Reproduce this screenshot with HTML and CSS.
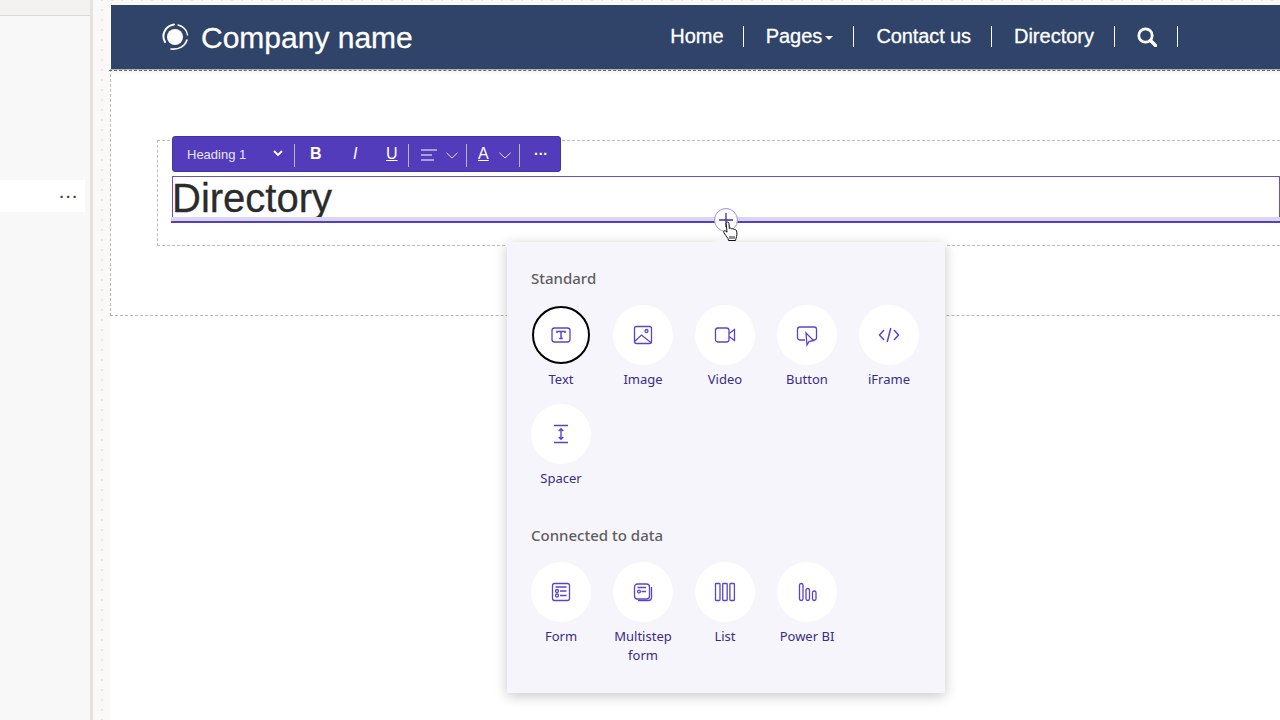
FILE: index.html
```html
<!DOCTYPE html>
<html lang="en">
<head>
    <meta charset="UTF-8">
    <meta name="viewport" content="width=device-width, initial-scale=1.0">
    <title>Directory</title>
    <link rel="stylesheet" href="styles.css">
</head>
<body>

<aside class="side">
    <div class="side-top"></div>
    <div class="side-row"><span class="side-more">···</span></div>
</aside>

<main class="canvas">
    <div class="page">
        <header class="site-header">
            <div class="brand">
                <svg class="brand-logo" width="28" height="28" viewBox="0 0 28 28">
                    <circle cx="14" cy="14" r="8" fill="#fff"/>
                    <path d="M4 19C0 12 4 3 13 1.500" fill="none" stroke="#fff" stroke-width="2" stroke-linecap="round"/>
                    <path d="M17 2C22 3 26 7 26.500 12" fill="none" stroke="#fff" stroke-width="1.400" stroke-linecap="round"/>
                    <path d="M26 17C24 23 18 27 10 26" fill="none" stroke="#fff" stroke-width="1.600" stroke-linecap="round"/>
                </svg>
                <span>Company name</span>
            </div>
            <nav class="nav">
                <a class="nav-item nav-home">Home</a>
                <a class="nav-item">Pages<i class="caret"></i></a>
                <a class="nav-item nav-contact">Contact us</a>
                <a class="nav-item">Directory</a>
                <a class="nav-item nav-search">
                    <svg width="20" height="20" viewBox="0 0 20 20">
                        <circle cx="8.500" cy="8.500" r="6.700" fill="none" stroke="#fff" stroke-width="2.800"/>
                        <path d="M13.500 13.500L18.500 18.500" stroke="#fff" stroke-width="3.400" stroke-linecap="round"/>
                    </svg>
                </a>
            </nav>
        </header>

        <section class="section">
            <div class="column">
                <div class="toolbar">
                    <span class="tb-style">Heading 1</span>
                    <svg class="tb-chev-bold" width="10" height="7" viewBox="0 0 10 7"><path d="M1 1L5 5L9 1" fill="none" stroke="#fff" stroke-width="1.800"/></svg>
                    <i class="tb-sep tb-sep-1"></i>
                    <b class="tb-btn tb-b">B</b>
                    <em class="tb-btn tb-i">I</em>
                    <span class="tb-btn tb-u">U</span>
                    <i class="tb-sep tb-sep-2"></i>
                    <svg class="tb-align" width="16" height="12" viewBox="0 0 16 12"><path d="M0 1H16M0 6H11M0 11H13" stroke="#fff" stroke-width="1"/></svg>
                    <svg class="tb-chev" width="12" height="7" viewBox="0 0 12 7"><path d="M.5 .8L6 6L11.500 .8" fill="none" stroke="#e4e1f5" stroke-width="1"/></svg>
                    <i class="tb-sep tb-sep-3"></i>
                    <span class="tb-btn tb-a">A</span>
                    <svg class="tb-chev tb-chev-2" width="12" height="7" viewBox="0 0 12 7"><path d="M.5 .8L6 6L11.500 .8" fill="none" stroke="#e4e1f5" stroke-width="1"/></svg>
                    <i class="tb-sep tb-sep-4"></i>
                    <span class="tb-more">···</span>
                </div>
                <h1 class="heading">Directory</h1>
            </div>
        </section>

        <button class="add-btn">
            <svg width="14" height="14" viewBox="0 0 14 14"><path d="M7 0V14M0 7H14" stroke="#3f2fa0" stroke-width="1.300"/></svg>
        </button>

        <div class="popover">
            <h2 class="group-title">Standard</h2>
            <div class="tiles">
                <div class="tile tile-selected">
                    <div class="tile-circle">
                        <svg width="24" height="24" viewBox="0 0 24 24" class="ico">
                            <rect x="3" y="5" width="18" height="14" rx="2.500"/>
                            <path d="M8 10V8.500H16V10M12 8.500V15.500M10.200 15.500H13.800" stroke-width="1.500"/>
                        </svg>
                    </div>
                    <span class="tile-label">Text</span>
                </div>
                <div class="tile">
                    <div class="tile-circle">
                        <svg width="24" height="24" viewBox="0 0 24 24" class="ico">
                            <rect x="3.500" y="3.500" width="17" height="17" rx="2"/>
                            <circle cx="15.500" cy="8" r="1.500"/>
                            <path d="M3.500 18.500L10.500 12L20.500 20"/>
                        </svg>
                    </div>
                    <span class="tile-label">Image</span>
                </div>
                <div class="tile">
                    <div class="tile-circle">
                        <svg width="24" height="24" viewBox="0 0 24 24" class="ico">
                            <rect x="2.500" y="5" width="13.500" height="14" rx="2.500"/>
                            <path d="M16 10.500L21.500 6.500V17.500L16 13.500"/>
                        </svg>
                    </div>
                    <span class="tile-label">Video</span>
                </div>
                <div class="tile">
                    <div class="tile-circle">
                        <svg width="24" height="24" viewBox="0 0 24 24" class="ico">
                            <path d="M10 17H5C3.500 17 2.500 16 2.500 14.500V6.500C2.500 5 3.500 4 5 4H19.500C21 4 21.500 5 21.500 6.500V14.500C21.500 16 20.500 17 19 17H17"/>
                            <path d="M11 10L12 22L14 18.500L18.500 17.500Z"/>
                        </svg>
                    </div>
                    <span class="tile-label">Button</span>
                </div>
                <div class="tile">
                    <div class="tile-circle">
                        <svg width="24" height="24" viewBox="0 0 24 24" class="ico">
                            <path d="M7 7L2.500 12L7 17M17 7L21.500 12L17 17M13.800 5L10.200 19" stroke-width="1.500"/>
                        </svg>
                    </div>
                    <span class="tile-label">iFrame</span>
                </div>
                <div class="tile">
                    <div class="tile-circle">
                        <svg width="24" height="24" viewBox="0 0 24 24" class="ico">
                            <path d="M5 3.500H19M5 20.500H19M12 7V17M9.800 9L12 6.800L14.200 9M9.800 15L12 17.200L14.200 15" stroke-width="1.400"/>
                        </svg>
                    </div>
                    <span class="tile-label">Spacer</span>
                </div>
            </div>

            <h2 class="group-title group-title-2">Connected to data</h2>
            <div class="tiles">
                <div class="tile">
                    <div class="tile-circle">
                        <svg width="24" height="24" viewBox="0 0 24 24" class="ico">
                            <rect x="3.500" y="3.500" width="17" height="17" rx="2"/>
                            <path d="M6.500 7H17.500M11 11H17.500M11 15.500H17.500"/>
                            <circle cx="8" cy="11" r="1.500"/>
                            <circle cx="8" cy="15.500" r="1.500"/>
                        </svg>
                    </div>
                    <span class="tile-label">Form</span>
                </div>
                <div class="tile">
                    <div class="tile-circle">
                        <svg width="24" height="24" viewBox="0 0 24 24" class="ico">
                            <rect x="3.500" y="4" width="15" height="15" rx="3"/>
                            <path d="M6.500 7.500H15M10.500 11.500H15"/>
                            <circle cx="8" cy="11.500" r="1.400"/>
                            <path d="M20.500 7V17.500C20.500 19.500 19.500 20.500 17.500 20.500H7"/>
                        </svg>
                    </div>
                    <span class="tile-label">Multistep form</span>
                </div>
                <div class="tile">
                    <div class="tile-circle">
                        <svg width="24" height="24" viewBox="0 0 24 24" class="ico">
                            <rect x="2.500" y="3.500" width="4.500" height="17" rx=".8"/>
                            <rect x="9.700" y="3.500" width="4.500" height="17" rx=".8"/>
                            <rect x="16.900" y="3.500" width="4.500" height="17" rx=".8"/>
                        </svg>
                    </div>
                    <span class="tile-label">List</span>
                </div>
                <div class="tile">
                    <div class="tile-circle">
                        <svg width="24" height="24" viewBox="0 0 24 24" class="ico">
                            <rect x="4.500" y="3.500" width="3.500" height="17" rx="1.750"/>
                            <rect x="11" y="8.500" width="3.500" height="12" rx="1.750"/>
                            <rect x="17.500" y="11" width="3.500" height="9.500" rx="1.750"/>
                        </svg>
                    </div>
                    <span class="tile-label">Power BI</span>
                </div>
            </div>
        </div>

        <svg class="hand" width="16" height="21" viewBox="0 0 16 21">
            <path d="M3.500 1.500C4.500 .5 5.800 1 6 2.500L6.300 7.500C7 6.800 8.300 7 8.700 8C9.500 7.400 10.600 7.700 11 8.600C12 8.200 13.400 8.800 13.600 10C14.200 12.500 14 15 13 17.500L12.500 19.500H5.500L5 17.500C3.500 15.500 2 13.500 .8 11.500C.2 10.300 1.500 9.200 2.700 10L4 11.200L3.200 2.800C3.100 2.300 3.200 1.800 3.500 1.500Z" fill="#fff" stroke="#111" stroke-width="1"/>
            <path d="M7 15V18M9 15V18M11 15V18" stroke="#222" stroke-width="1"/>
        </svg>
    </div>
</main>

</body>
</html>
```

FILE: styles.css
```css
* {
    box-sizing: border-box;
}

body {
    margin: 0;
    height: 720px;
    display: flex;
    overflow: hidden;
    font-family: "Liberation Sans", Arial, sans-serif;
    background: #fff;
}

.side {
    width: 93px;
    flex-shrink: 0;
    background: #f8f8f8;
    border-right: 3px solid #e4e3e1;
}

.side-top {
    height: 16px;
    background: #f3f2f1;
    border-bottom: 1px solid #dcdad8;
}

.side-row {
    height: 32px;
    width: 85px;
    margin-top: 164px;
    padding-right: 6px;
    background: #fff;
    display: flex;
    align-items: center;
    justify-content: flex-end;
}

.side-more {
    font-size: 15px;
    font-weight: bold;
    letter-spacing: 1.500px;
    color: #444;
}

.canvas {
    flex: 1;
    min-width: 0;
    padding: 5px 0 0 17px;
    background-color: #faf9f8;
    background-image: radial-gradient(circle, #e9e7e5 1.300px, transparent 1.600px);
    background-size: 10px 10px;
    background-position: 4px -5px;
}

.page {
    position: relative;
    height: 715px;
    background: #fff;
}

.site-header {
    height: 64px;
    margin-left: 1px;
    background: #2f4468;
    color: #fff;
    display: flex;
    align-items: center;
    padding: 0 102px 2px 50px;
    -webkit-text-stroke: .3px #fff;
}

.brand {
    display: flex;
    align-items: center;
    gap: 12px;
    padding-top: 4px;
    font-size: 30px;
}

.brand-logo {
    margin-bottom: 2px;
}

.nav {
    margin-left: auto;
    display: flex;
    align-items: center;
    font-size: 20px;
}

.nav-item {
    display: flex;
    align-items: center;
    height: 21px;
    padding: 0 20px 0 22px;
    border-right: 1px solid #fff;
}

.nav-home {
    padding-right: 19px;
}

.nav-contact {
    letter-spacing: -.1px;
}

.nav-search {
    padding: 1px 20px 0 22px;
}

.caret {
    width: 0;
    height: 0;
    margin: 3px 0 0 3px;
    border-left: 4px solid transparent;
    border-right: 4px solid transparent;
    border-top: 4px solid #fff;
}

.section {
    height: 247px;
    padding-top: 70px;
    border-top: 1px solid #b5b5b5;
    border-left: 1px dashed #b9b9b9;
    border-bottom: 1px dashed #b9b9b9;
    box-shadow: inset 0 5px 5px -4px #e6e6e6;
    position: relative;
}

.section::before {
    content: "";
    position: absolute;
    left: -2px;
    right: 0;
    top: 0;
    border-top: 1px dashed #666;
}

.column {
    position: relative;
    height: 106px;
    margin: 0 -20px 0 46px;
    padding: 35px 19px 0 14px;
    border: 1px dashed #bdbdbd;
}

.heading {
    position: relative;
    height: 43px;
    margin: 0;
    border: 1px solid #6553c4;
    border-bottom: 0;
    font-size: 40px;
    font-weight: normal;
    line-height: 43px;
    text-indent: -1px;
    color: #2b2b2b;
    -webkit-text-stroke: .3px #2b2b2b;
}

.heading::after {
    content: "";
    position: absolute;
    left: -2px;
    right: -2px;
    top: 40px;
    height: 4px;
    background: #d9d5f3;
    border-bottom: 2px solid #5340c0;
}

.toolbar {
    position: absolute;
    left: 14px;
    top: -5px;
    width: 389px;
    height: 36px;
    background: #523cbc;
    border: 1px solid #463499;
    border-radius: 3px;
    color: #fff;
}

/* toolbar controls sit at fixed spots over the bar */
.toolbar > * {
    position: absolute;
}

.tb-style {
    left: 14px;
    top: 10px;
    font-size: 13px;
    color: #e8e6f6;
}

.tb-chev-bold {
    left: 100px;
    top: 13px;
}

.tb-sep {
    top: 7px;
    width: 1px;
    height: 23px;
    background: #b9b7a6;
}

.tb-sep-1 { left: 121px; }
.tb-sep-2 { left: 235px; }
.tb-sep-3 { left: 293px; }
.tb-sep-4 { left: 346px; }

.tb-btn {
    top: 8px;
    font-size: 16px;
    line-height: 18px;
}

.tb-b { left: 137px; }
.tb-i { left: 180px; }
.tb-u { left: 213px; text-decoration: underline; }
.tb-a { left: 305px; text-decoration: underline; }

.tb-align {
    left: 248px;
    top: 12px;
}

.tb-chev {
    left: 273px;
    top: 15px;
}

.tb-chev-2 {
    left: 326px;
}

.tb-more {
    left: 361px;
    top: 9px;
    font-size: 14px;
    font-weight: bold;
}

.add-btn {
    position: absolute;
    left: 604px;
    top: 203px;
    width: 24px;
    height: 24px;
    padding: 0;
    border: 1px solid #9b8fdc;
    border-radius: 50%;
    background: #fff;
    display: flex;
    align-items: center;
    justify-content: center;
}

.hand {
    position: absolute;
    left: 613px;
    top: 216px;
}

.popover {
    position: absolute;
    left: 397px;
    top: 237px;
    width: 438px;
    height: 451px;
    padding: 26px 15px 28px 13px;
    background: #f6f5fc;
    box-shadow: 0 3px 12px rgba(0, 0, 0, .22);
    font-family: "Noto Sans", "Open Sans", sans-serif;
}

.popover::before {
    content: "";
    position: absolute;
    left: 211px;
    top: -7px;
    width: 14px;
    height: 14px;
    background: #f6f5fc;
    transform: rotate(45deg);
}

.group-title {
    position: relative;
    margin: 0 0 17px 11px;
    font-size: 15px;
    font-weight: 500;
    line-height: 20px;
    color: #605e5c;
}

.group-title-2 {
    margin-top: 37px;
}

.tiles {
    display: grid;
    grid-template-columns: repeat(5, 82px);
    row-gap: 15px;
}

.tile {
    display: flex;
    flex-direction: column;
    align-items: center;
    text-align: center;
}

.tile-circle {
    width: 60px;
    height: 60px;
    margin-bottom: 5px;
    border-radius: 50%;
    background: #fff;
    display: flex;
    align-items: center;
    justify-content: center;
}

.tile-selected .tile-circle {
    width: 58px;
    height: 58px;
    margin: 1px 1px 6px;
    border: 2px solid #000;
}

.tile-label {
    width: 74px;
    font-size: 13px;
    line-height: 19px;
    color: #3a2c82;
}

.ico {
    fill: none;
    stroke: #5a45c8;
    stroke-width: 1.300;
}
```
